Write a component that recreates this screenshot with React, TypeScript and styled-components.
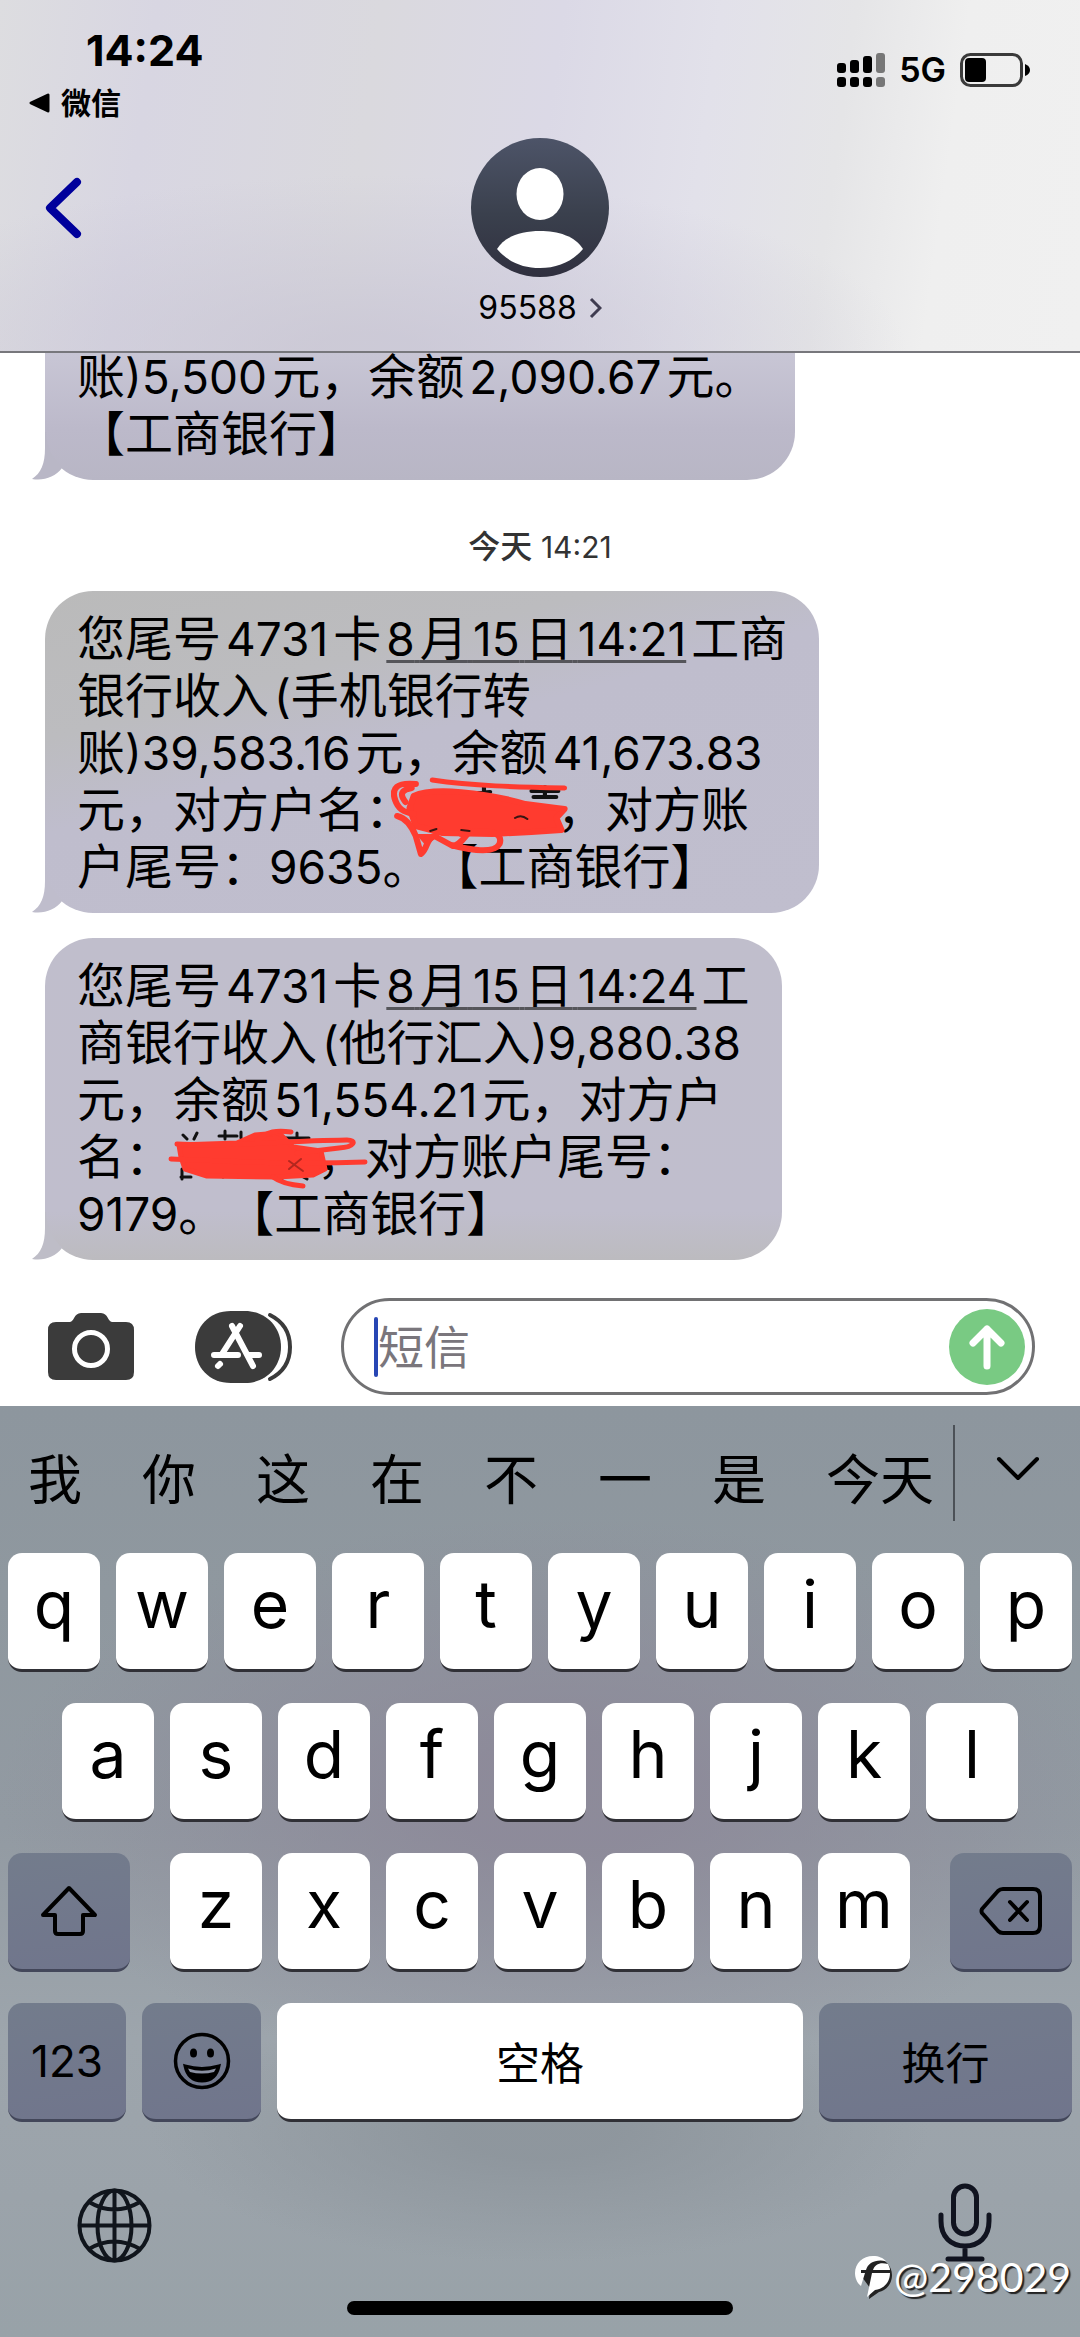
import React from 'react';
import styled, { createGlobalStyle } from 'styled-components';

const sans = `Inter, "Noto Sans CJK SC", sans-serif`;

const GlobalStyle = createGlobalStyle`
  * { box-sizing: border-box; }
  html, body { margin: 0; padding: 0; }
  body { background: #fff; color: #000; font-family: ${sans}; }
  button { font-family: inherit; color: inherit; border: 0; padding: 0; margin: 0; background: none; cursor: pointer; }
  svg { display: block; }
`;

const Screen = styled.div`
  position: relative;
  display: flex;
  flex-direction: column;
  min-height: 100vh;
  overflow: hidden;
`;

/* ---------- header ---------- */

const Header = styled.header`
  height: 353px;
  border-bottom: 2px solid #77777c;
  background:
    radial-gradient(ellipse 50% 50% at 34% 100%, rgba(200, 197, 212, 0.75) 10%, rgba(200, 197, 212, 0) 100%),
    linear-gradient(98deg, #dddde0 0%, #d8d6e2 14%, #dad9de 34%, #dbd9e6 50%, #e2e1ea 64%, #e5e5e7 76%, #efefef 86%, #f0f0f0 100%);
`;

const StatusBar = styled.div`
  display: flex;
  justify-content: space-between;
  height: 130px;
  padding: 22px 49px 0 28px;
`;

const StatusLeft = styled.div`
  display: flex;
  flex-direction: column;
  gap: 8px;
`;

const Clock = styled.div`
  padding-left: 58px;
  font-size: 43px;
  line-height: 56px;
  font-weight: 700;
`;

const ReturnLink = styled.a`
  display: flex;
  align-items: center;
  gap: 10px;
  color: #000;
  text-decoration: none;
  font-size: 30px;
  line-height: 34px;
  font-weight: 600;
`;

const StatusRight = styled.div`
  display: flex;
  align-items: center;
  gap: 14px;
  height: 52px;
  margin-top: 22px;
`;

const Network = styled.span`
  font-size: 34px;
  line-height: 36px;
  font-weight: 600;
`;

const NavBar = styled.nav`
  display: grid;
  grid-template-columns: 1fr auto 1fr;
  padding: 8px 40px 0;
`;

const BackButton = styled.button`
  justify-self: start;
  align-self: start;
  margin-top: 38px;
`;

const Contact = styled.button`
  display: flex;
  flex-direction: column;
  align-items: center;
  gap: 13px;
`;

const ContactName = styled.span`
  display: flex;
  align-items: center;
  gap: 12px;
  font-size: 32px;
  line-height: 36px;
`;

/* ---------- conversation ---------- */

const Thread = styled.main`
  display: flex;
  flex-direction: column;
  align-items: flex-start;
  padding-left: 45px;
`;

const Stamp = styled.time`
  align-self: stretch;
  margin-left: -45px;
  padding: 49px 0 26px;
  text-align: center;
  color: #333;
  font-size: 32px;
  line-height: 36px;
  font-weight: 500;
`;

const StampHour = styled.span`
  font-size: 30px;
  line-height: 30px;
  font-weight: 400;
`;

const Line = styled.span`
  display: block;
  height: 57px;
  white-space: pre;
`;

const Bubble = styled.article<{ $fill: string; $clipped?: boolean; $gap?: number }>`
  position: relative;
  padding: ${p => (p.$clipped ? '0 32px 18px 32px' : '19px 32px 18px 32px')};
  margin-top: ${p => p.$gap ?? 0}px;
  border-radius: ${p => (p.$clipped ? '0 0 48px 48px' : '48px')};
  background: ${p => p.$fill};
  font-size: 48px;
  line-height: 57px;
  text-spacing-trim: space-all;

  ${Line}:first-of-type {
    ${p => (p.$clipped ? 'height: 52px; line-height: 48px;' : '')}
  }
`;

const Latin = styled.span`
  font-size: 46px;
  line-height: 1;
`;

const Gap = styled.span`
  font-size: 18px;
  line-height: 1;
`;

const DateLink = styled.a`
  color: inherit;
  text-decoration: underline;
  text-decoration-color: #55555a;
  text-decoration-thickness: 3px;
  text-decoration-skip-ink: none;
  text-underline-offset: 4px;
`;

const Tail = styled.svg`
  position: absolute;
  left: -13px;
  bottom: 0;
`;

const Hidden = styled.span`
  position: relative;
  display: inline-block;
  width: 3em;
  height: 1em;
  vertical-align: top;
`;

const Marker = styled.svg<{ $x: number; $y: number }>`
  position: absolute;
  z-index: 1;
  left: ${p => p.$x}px;
  top: ${p => p.$y}px;
`;

/* ---------- compose bar ---------- */

const Compose = styled.form`
  display: flex;
  align-items: center;
  padding: 38px 45px 11px 48px;
`;

const ToolButton = styled.button<{ $after: number }>`
  flex: none;
  margin-right: ${p => p.$after}px;
`;

const Field = styled.div`
  flex: 1;
  min-width: 0;
  display: flex;
  align-items: center;
  height: 97px;
  padding: 0 7px 0 30px;
  border: 3px solid #717173;
  border-radius: 49px;
`;

const Caret = styled.span`
  flex: none;
  width: 4px;
  height: 60px;
  border-radius: 2px;
  background: #2746b4;
`;

const TextBox = styled.input`
  flex: 1;
  min-width: 0;
  height: 70px;
  border: 0;
  padding: 0;
  outline: 0;
  background: none;
  font-family: ${sans};
  font-size: 46px;
  color: #000;
  &::placeholder { color: #7a767c; opacity: 1; }
`;

const SendButton = styled.button`
  flex: none;
  display: grid;
  place-items: center;
  width: 76px;
  height: 76px;
  border-radius: 50%;
  background: #79ca83;
`;

/* ---------- keyboard ---------- */

const Keyboard = styled.section`
  flex: 1;
  display: flex;
  flex-direction: column;
  background:
    radial-gradient(ellipse 52% 30% at 52% 42%, rgba(140, 135, 152, 0.8) 20%, rgba(140, 135, 152, 0) 100%),
    radial-gradient(ellipse 36% 14% at 50% 78%, rgba(141, 149, 156, 0.9) 20%, rgba(141, 149, 156, 0) 100%),
    linear-gradient(180deg, #8d969e 0%, #8f989f 20%, #929aa2 45%, #9da5ac 68%, #9ba3aa 85%, #98a2a8 100%);
`;

const Candidates = styled.div`
  display: flex;
  align-items: center;
  height: 147px;
  padding: 2px 39px 0 28px;
`;

const Candidate = styled.button`
  flex: none;
  margin-right: 60px;
  font-size: 54px;
  line-height: 64px;
  &:nth-child(8) { margin-right: 19px; }
`;

const Divider = styled.span`
  flex: none;
  width: 2px;
  height: 96px;
  margin-top: -16px;
  background: #4c5157;
`;

const Collapse = styled.button`
  margin-left: auto;
  margin-top: -24px;
`;

const Rows = styled.div`
  display: flex;
  flex-direction: column;
  gap: 31px;
  padding: 0 8px;
`;

const Row = styled.div<{ $inset?: number }>`
  display: flex;
  gap: 16px;
  padding: 0 ${p => p.$inset ?? 0}px;
`;

const Key = styled.button<{ $dark?: boolean; $grow?: number; $side?: 'left' | 'right' }>`
  flex: ${p => p.$grow ?? 92} 1 0;
  min-width: 0;
  display: flex;
  align-items: center;
  justify-content: center;
  height: 119px;
  border-radius: 14px;
  border-bottom: 3px solid ${p => (p.$dark ? '#43475a' : '#303036')};
  background: ${p => (p.$dark ? 'linear-gradient(170deg, #737c8c, #70758c)' : '#fff')};
  margin-right: ${p => (p.$side === 'left' ? 24 : 0)}px;
  margin-left: ${p => (p.$side === 'right' ? 24 : 0)}px;
`;

const Letter = styled.span`
  padding-bottom: 14px;
  font-size: 66px;
  line-height: 80px;
`;

const Caption = styled.span<{ $chinese?: boolean }>`
  padding-top: ${p => (p.$chinese ? 6 : 0)}px;
  font-size: 44px;
  line-height: 60px;
`;

const BottomRow = styled.div`
  display: flex;
  justify-content: space-between;
  align-items: flex-end;
  padding: 61px 88px 0 77px;
`;

const HomeBar = styled.div`
  width: 386px;
  height: 14px;
  margin: 38px auto 21px;
  border-radius: 7px;
  background: #000;
`;

const Watermark = styled.div`
  position: absolute;
  right: 9px;
  bottom: 36px;
  display: flex;
  align-items: center;
  gap: 2px;
  color: #fff;
  font-family: Lato, sans-serif;
  font-size: 41px;
  line-height: 48px;
  text-shadow: 2px 2px 1px #222;
`;

/*
 * Runs of digits and Latin punctuation are set a little smaller than the
 * Chinese text, with a thin space wherever a run meets an ideograph.
 */
function Mixed({ text }: { text: string }) {
  const ideograph = /[\u4e00-\u9fff]/;
  const parts = text.split(/([0-9.,:()]+)/).filter(Boolean);
  return (
    <>
      {parts.map((part, i) => {
        if (!/^[0-9.,:()]/.test(part)) return <React.Fragment key={i}>{part}</React.Fragment>;
        const before = parts[i - 1]?.slice(-1) ?? '';
        const after = parts[i + 1]?.[0] ?? '';
        return (
          <React.Fragment key={i}>
            {ideograph.test(before) && part[0] !== ')' && <Gap> </Gap>}
            <Latin>{part}</Latin>
            {ideograph.test(after) && !part.endsWith('(') && <Gap> </Gap>}
          </React.Fragment>
        );
      })}
    </>
  );
}

function BubbleTail({ color }: { color: string }) {
  return (
    <Tail width="50" height="60" viewBox="0 0 50 60" aria-hidden="true">
      <path d="M13 12V28C13 44 9 53 0 59C12 61 23 57 30 48L31 48A48 48 0 0 1 14 12Z" fill={color} />
    </Tail>
  );
}

function SignalIcon() {
  const tops = [10, 7, 3, 0];
  return (
    <svg width="48" height="34" viewBox="0 0 48 34" aria-label="信号">
      {tops.map((y, i) => (
        <g key={i} fill={i === 3 ? '#777' : '#000'}>
          <rect x={i * 13} y={y} width="9" height={20 - y} rx="3" />
          <rect x={i * 13} y="24" width="9" height="10" rx="3" />
        </g>
      ))}
    </svg>
  );
}

function BatteryIcon() {
  return (
    <svg width="71" height="34" viewBox="0 0 71 34" aria-label="电池">
      <rect x="1.5" y="1.5" width="60" height="31" rx="9" fill="none" stroke="#3a3a3a" strokeWidth="3" />
      <rect x="5" y="5" width="21" height="24" rx="4" />
      <path d="M65 11Q70 13 70 17Q70 21 65 23Z" />
    </svg>
  );
}

function Avatar() {
  return (
    <svg width="138" height="139" viewBox="0 0 138 139" aria-hidden="true">
      <defs>
        <linearGradient id="avatar" x1="0" y1="0" x2="0" y2="1">
          <stop offset="0" stopColor="#4d5468" />
          <stop offset="0.55" stopColor="#3a404d" />
          <stop offset="1" stopColor="#30303f" />
        </linearGradient>
      </defs>
      <ellipse cx="69" cy="69.5" rx="69" ry="69.5" fill="url(#avatar)" />
      <ellipse cx="69" cy="56" rx="23.500" ry="26" fill="#fff" />
      <path d="M26 111C34 98 51 93 69 93C87 93 104 98 112 111C101 124 86 130 69 130C52 130 37 124 26 111Z" fill="#fff" />
    </svg>
  );
}

function CameraIcon() {
  return (
    <svg width="86" height="68" viewBox="0 0 86 68" aria-hidden="true">
      <path d="M8 9H22C26 9 26 0 33 0H53C60 0 60 9 64 9H78Q86 9 86 17V59Q86 67 78 67H8Q0 67 0 59V17Q0 9 8 9Z" fill="#3b3b3b" />
      <circle cx="43" cy="36" r="16.500" fill="none" stroke="#fff" strokeWidth="5" />
    </svg>
  );
}

function AppsIcon() {
  return (
    <svg width="98" height="72" viewBox="0 0 98 72" fill="none" strokeLinecap="round" aria-hidden="true">
      <path d="M75 4C91 12 95 24 95 36C95 48 91 60 75 68" stroke="#3b3b3b" strokeWidth="4" />
      <path d="M36 0H50C72 0 89 16 89 36C89 56 72 72 50 72H36C14 72 0 56 0 36C0 16 14 0 36 0Z" fill="#fff" />
      <path d="M36 0H50C71 0 86 16 86 36C86 56 71 72 50 72H36C14 72 0 56 0 36C0 16 14 0 36 0Z" fill="#3b3b3b" />
      <g stroke="#fff" strokeWidth="6">
        <path d="M45 15L27 43" />
        <path d="M37 15L58 55" />
        <path d="M19 44H43M54 44H64" />
        <path d="M25 53L23 55" />
      </g>
    </svg>
  );
}

function GlobeIcon() {
  return (
    <svg width="75" height="75" viewBox="0 0 75 75" fill="none" stroke="#10151c" strokeWidth="4" aria-hidden="true">
      <circle cx="37.500" cy="37.500" r="35" />
      <ellipse cx="37.500" cy="37.500" rx="17" ry="35" />
      <path d="M37.500 2V73M2 37.500H73M12 14Q37 29 63 14M12 61Q37 46 63 61" />
    </svg>
  );
}

function MicIcon() {
  return (
    <svg width="54" height="80" viewBox="0 0 54 80" fill="none" stroke="#10131f" strokeWidth="5" strokeLinecap="round" aria-hidden="true">
      <rect x="15.500" y="3" width="23" height="48" rx="11.500" />
      <path d="M3 32V38C3 54 13 63 27 63C41 63 51 54 51 38V32M27 63V76M10 76H44" />
    </svg>
  );
}

function WatermarkLogo() {
  return (
    <svg width="37" height="44" viewBox="0 0 37 44" aria-hidden="true">
      <path d="M19 3C29 3 37 10 37 20C37 30 30 36 24 37L14 44L15 33L7 22L2 22C1 10 9 3 19 3Z" fill="#222" />
      <path d="M18 1C24 1 28 3 31 6C20 4 13 8 11 15H6V18H10L6 31C2 28 0 23 0 18C0 8 8 1 18 1Z" fill="#fff" />
      <path d="M33 9C34 11 35 13 35 15H18C20 9 25 7 33 9ZM17 18H35C35 28 28 34 20 35L12 42Z" fill="#fff" />
    </svg>
  );
}

const letterRows = ['qwertyuiop', 'asdfghjkl', 'zxcvbnm'].map(r => r.split(''));
const words = ['我', '你', '这', '在', '不', '一', '是', '今天'];

const renderLetters = (row: string[]) =>
  row.map(c => (
    <Key key={c} type="button">
      <Letter>{c}</Letter>
    </Key>
  ));

export default function App() {
  return (
    <Screen>
      <GlobalStyle />
      <Header>
        <StatusBar>
          <StatusLeft>
            <Clock>14:24</Clock>
            <ReturnLink href="#">
              <svg width="23" height="22" viewBox="0 0 23 22" aria-hidden="true">
                <path d="M3 11L20 3V19Z" stroke="#000" strokeWidth="3" strokeLinejoin="round" />
              </svg>
              微信
            </ReturnLink>
          </StatusLeft>
          <StatusRight>
            <SignalIcon />
            <Network>5G</Network>
            <BatteryIcon />
          </StatusRight>
        </StatusBar>
        <NavBar>
          <BackButton type="button" aria-label="返回">
            <svg width="46" height="64" viewBox="0 0 46 64" fill="none" aria-hidden="true">
              <path d="M37 6L10 32L37 58" stroke="#00009c" strokeWidth="8" strokeLinecap="round" strokeLinejoin="round" />
            </svg>
          </BackButton>
          <Contact type="button">
            <Avatar />
            <ContactName>
              95588
              <svg width="13" height="22" viewBox="0 0 13 22" fill="none" aria-hidden="true">
                <path d="M2 2L11 11L2 20" stroke="#3f3c50" strokeWidth="3" />
              </svg>
            </ContactName>
          </Contact>
        </NavBar>
      </Header>

      <Thread>
        <Bubble $clipped $fill="linear-gradient(180deg, #c8c6d5 0%, #bcb9ca 60%, #b8b6c5 100%)">
          <BubbleTail color="#b9b7c6" />
          <Line><Mixed text="账)5,500元，余额2,090.67元。" /></Line>
          <Line>【工商银行】</Line>
        </Bubble>

        <Stamp>今天 <StampHour>14:21</StampHour></Stamp>

        <Bubble $fill="linear-gradient(165deg, #bababa 0%, #bcbcbf 28%, #bfbdcd 46%, #c0bece 100%)">
          <BubbleTail color="#bfbdcc" />
          <Line>
            <Mixed text="您尾号4731卡" />
            <Gap> </Gap>
            <DateLink href="#"><Mixed text="8月15日14:21" /></DateLink>
            <Gap> </Gap>
            工商
          </Line>
          <Line><Mixed text="银行收入(手机银行转" /></Line>
          <Line><Mixed text="账)39,583.16元，余额41,673.83" /></Line>
          <Line>
            元，对方户名：
            <Hidden aria-label="已涂抹">
              <Marker $x={-22} $y={-5} width="188" height="86" viewBox="0 0 182 86" preserveAspectRatio="none" fill="none" strokeLinecap="round" strokeLinejoin="round">
                <path d="M28 19H42M82 17L96 16M90 11V16M136 15H162M149 11V20M138 21H160" stroke="#111" strokeWidth="4" />
                <path d="M22 20C40 11 90 16 130 28L160 32L168 33L160 42L165 54L136 56L98 58L50 57L24 50L18 32Z" fill="#ff3b2f" stroke="#ff3b2f" strokeWidth="6" />
                <path d="M40 4C80 10 120 11 168 12" stroke="#ff3b2f" strokeWidth="5" />
                <path d="M24 8C6 6 0 12 4 24C7 33 12 36 22 38M14 26C8 18 10 14 20 12M6 40C14 42 20 50 24 60L29 78C36 72 34 62 42 60L58 69C76 74 100 78 105 68C110 54 88 53 68 58M60 70C68 68 70 62 76 56" stroke="#ff3b2f" strokeWidth="6" />
                <path d="M24 58H48L34 70Z" fill="#ff3b2f" />
                <path d="M120 42Q126 38 132 43M38 55L44 53M68 54L76 55" stroke="#3a1512" strokeWidth="2" />
              </Marker>
            </Hidden>
            ，对方账
          </Line>
          <Line><Mixed text="户尾号：9635。【工商银行】" /></Line>
        </Bubble>

        <Bubble $gap={25} $fill="linear-gradient(180deg, #c0becc 0%, #c0becd 85%, #bcbbbf 100%)">
          <BubbleTail color="#bebdc7" />
          <Line>
            <Mixed text="您尾号4731卡" />
            <Gap> </Gap>
            <DateLink href="#"><Mixed text="8月15日14:24" /></DateLink>
            <Gap> </Gap>
            工
          </Line>
          <Line><Mixed text="商银行收入(他行汇入)9,880.38" /></Line>
          <Line><Mixed text="元，余额51,554.21元，对方户" /></Line>
          <Line>
            名：
            <Hidden aria-label="已涂抹">
              <Marker $x={-6} $y={-1} width="202" height="64" viewBox="0 0 202 64" fill="none" strokeLinecap="round" strokeLinejoin="round">
                <path d="M16 8L20 12M30 6L27 12M52 9H70M58 4V12M74 5V11M118 11H142M130 6V11M14 50H24M15 42V52M56 50V46M114 52L138 38M118 40L140 52" stroke="#111" strokeWidth="3" />
                <path d="M12 18L70 16L88 8L112 6L126 20L154 24L158 42L146 48L110 50L40 49L18 42L14 30Z" fill="#ff3b2f" stroke="#ff3b2f" strokeWidth="5" />
                <path d="M10 17C60 20 110 14 180 13C190 13 188 20 172 21L130 26M4 32C60 34 120 38 198 35M90 14C100 4 110 3 124 5M106 50C114 56 124 58 136 59" stroke="#ff3b2f" strokeWidth="5" />
                <path d="M122 42L134 32M122 34L136 44" stroke="#b3271f" strokeWidth="2" />
              </Marker>
            </Hidden>
            ，对方账户尾号：
          </Line>
          <Line><Mixed text="9179。【工商银行】" /></Line>
        </Bubble>
      </Thread>

      <Compose onSubmit={e => e.preventDefault()}>
        <ToolButton type="button" $after={61} aria-label="相机"><CameraIcon /></ToolButton>
        <ToolButton type="button" $after={48} aria-label="应用"><AppsIcon /></ToolButton>
        <Field>
          <Caret />
          <TextBox type="text" placeholder="短信" aria-label="短信" />
          <SendButton type="submit" aria-label="发送">
            <svg width="40" height="46" viewBox="0 0 40 46" fill="none" stroke="#fff" strokeWidth="7" strokeLinecap="round" strokeLinejoin="round" aria-hidden="true">
              <path d="M20 42V5M6 19L20 5L34 19" />
            </svg>
          </SendButton>
        </Field>
      </Compose>

      <Keyboard>
        <Candidates>
          {words.map(w => <Candidate key={w} type="button">{w}</Candidate>)}
          <Divider />
          <Collapse type="button" aria-label="收起">
            <svg width="46" height="28" viewBox="0 0 46 28" fill="none" stroke="#000" strokeWidth="4" strokeLinecap="round" strokeLinejoin="round" aria-hidden="true">
              <path d="M4 4L23 23L42 4" />
            </svg>
          </Collapse>
        </Candidates>
        <Rows>
          <Row>{renderLetters(letterRows[0])}</Row>
          <Row $inset={54}>{renderLetters(letterRows[1])}</Row>
          <Row>
            <Key type="button" $dark $grow={122} $side="left" aria-label="大写">
              <svg width="58" height="52" viewBox="0 0 58 52" fill="none" stroke="#000" strokeWidth="4" strokeLinejoin="round" aria-hidden="true">
                <path d="M29 3L55 30H43V46Q43 49 40 49H18Q15 49 15 46V30H3Z" />
              </svg>
            </Key>
            {renderLetters(letterRows[2])}
            <Key type="button" $dark $grow={122} $side="right" aria-label="删除">
              <svg width="64" height="50" viewBox="0 0 64 50" fill="none" stroke="#000" strokeWidth="4" strokeLinecap="round" strokeLinejoin="round" aria-hidden="true">
                <path d="M24 3H54Q61 3 61 10V40Q61 47 54 47H24Q21 47 19 45L3 27Q2 25 3 23L19 5Q21 3 24 3ZM31 16L48 34M48 16L31 34" />
              </svg>
            </Key>
          </Row>
          <Row>
            <Key type="button" $dark $grow={118}><Caption>123</Caption></Key>
            <Key type="button" $dark $grow={119} aria-label="表情">
              <svg width="58" height="58" viewBox="0 0 58 58" aria-hidden="true">
                <circle cx="29" cy="29" r="26.500" fill="none" stroke="#000" strokeWidth="3.500" />
                <ellipse cx="20.500" cy="21" rx="3.500" ry="4.500" />
                <ellipse cx="37.500" cy="21" rx="3.500" ry="4.500" />
                <path d="M12 34Q29 39 46 34Q43 49 29 49Q15 49 12 34Z" stroke="#000" strokeWidth="3" />
                <path d="M15 36.500Q29 41 43 36.500L41 40Q29 43 17 40Z" fill="#8a90a2" />
              </svg>
            </Key>
            <Key type="button" $grow={526}><Caption $chinese>空格</Caption></Key>
            <Key type="button" $dark $grow={253}><Caption $chinese>换行</Caption></Key>
          </Row>
        </Rows>
        <BottomRow>
          <button type="button" aria-label="切换键盘"><GlobeIcon /></button>
          <button type="button" aria-label="听写"><MicIcon /></button>
        </BottomRow>
        <HomeBar />
      </Keyboard>

      <Watermark>
        <WatermarkLogo />
        <span>@298029</span>
      </Watermark>
    </Screen>
  );
}
